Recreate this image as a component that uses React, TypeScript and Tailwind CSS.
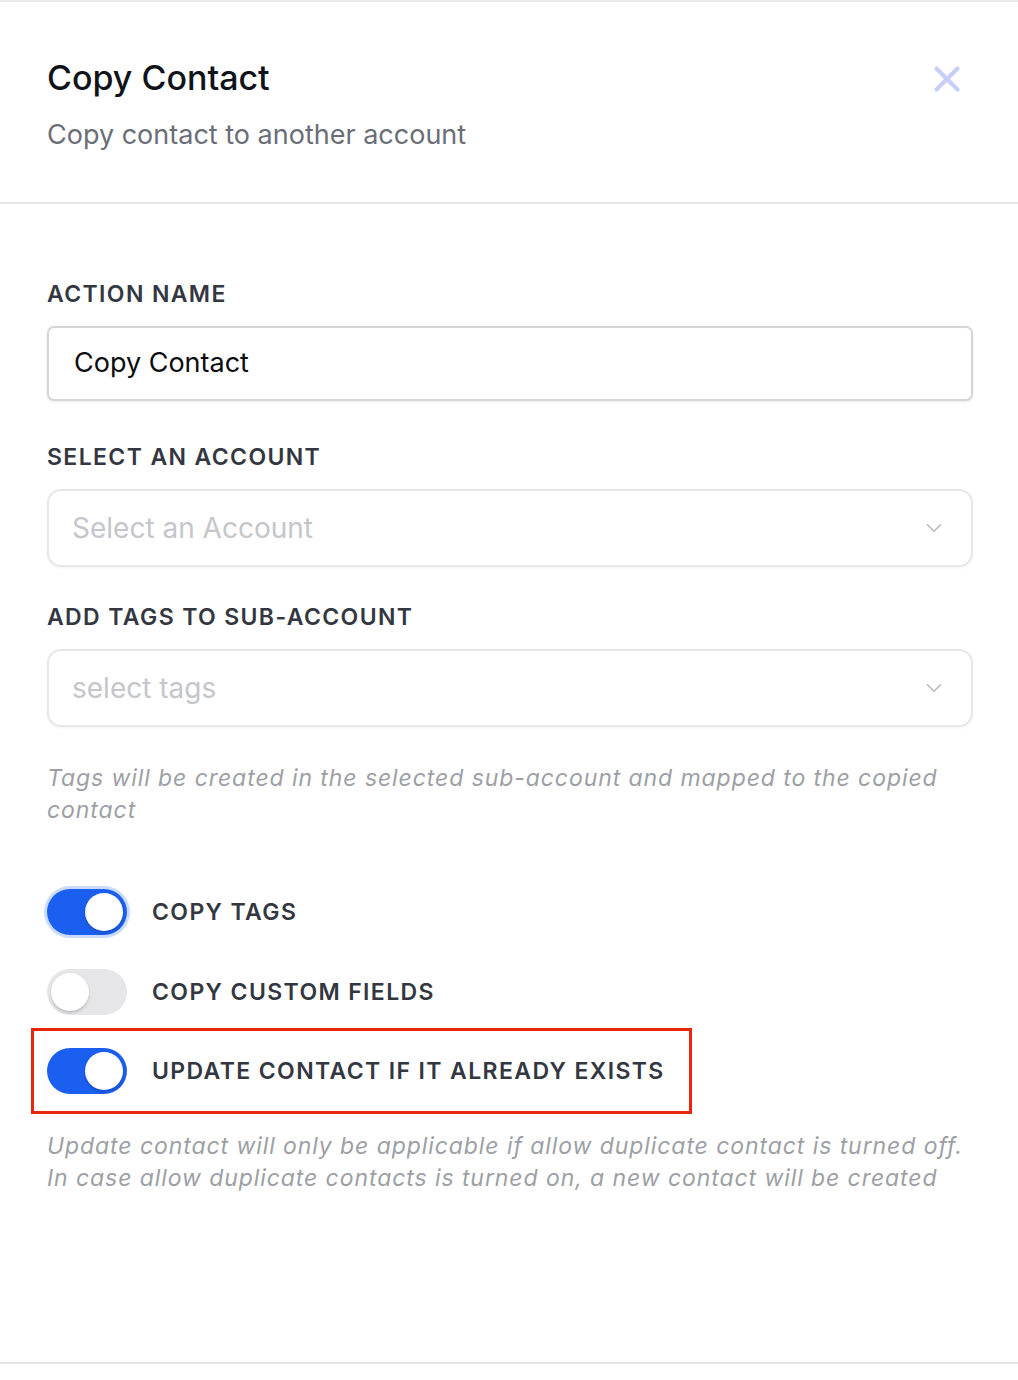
import { X, ChevronDown } from "lucide-react";

interface ToggleProps {
  on: boolean;
  focused?: boolean;
}

function Toggle({ on, focused }: ToggleProps) {
  return (
    <div
      className={`relative flex h-[46px] w-[80px] shrink-0 items-center rounded-full px-[4px] ${
        on ? "justify-end bg-[#1b5ff0]" : "justify-start bg-[#e6e6e8]"
      } ${focused ? "ring-[3px] ring-[#c9dcfd]" : ""}`}
    >
      <div className="h-[38px] w-[38px] rounded-full bg-white shadow-[0_2px_3px_rgba(0,0,0,0.18)]" />
    </div>
  );
}

function Label({ children }: { children: React.ReactNode }) {
  return (
    <div className="mb-[18px] text-[23px] font-semibold leading-[28px] tracking-[0.06em] text-[#333741]">
      {children}
    </div>
  );
}

function SelectBox({ placeholder }: { placeholder: string }) {
  return (
    <div className="flex h-[78px] items-center justify-between rounded-[14px] border-2 border-[#e7e7ea] bg-white pl-[23px] pr-[24px] shadow-[0_1px_3px_rgba(0,0,0,0.05)]">
      <span className="text-[28px] text-[#c4c6cc]">{placeholder}</span>
      <ChevronDown className="h-[26px] w-[26px] text-[#b8b9be]" strokeWidth={1.5} />
    </div>
  );
}

export default function App() {
  return (
    <div
      className="flex min-h-[1380px] w-full flex-col bg-white"
      style={{ fontFamily: "Inter, 'Noto Sans', sans-serif" }}
    >
      <div className="h-[2px] bg-[#ebebec]" />
      <div className="flex items-start justify-between border-b-2 border-[#e8e8ea] pb-[50px] pl-[47px] pr-[50px] pt-[54px]">
        <div>
          <h1 className="text-[34px] font-medium leading-[44px] text-[#11131a]">Copy Contact</h1>
          <p className="mt-[18px] text-[27px] leading-[34px] text-[#6b6e76]">Copy contact to another account</p>
        </div>
        <X className="mt-[2px] h-[42px] w-[42px] text-[#c7cff9]" strokeWidth={2.4} />
      </div>

      <div className="pl-[47px] pr-[45px] pt-[76px]">
        <Label>ACTION NAME</Label>
        <div className="flex h-[75px] items-center rounded-[7px] border-2 border-[#d6d6d9] bg-white pl-[25px] shadow-[0_1px_3px_rgba(0,0,0,0.08)]">
          <span className="text-[27px] text-[#0b0c0f]">Copy Contact</span>
        </div>

        <div className="mt-[42px]">
          <Label>SELECT AN ACCOUNT</Label>
          <SelectBox placeholder="Select an Account" />
        </div>

        <div className="mt-[36px]">
          <Label>ADD TAGS TO SUB-ACCOUNT</Label>
          <SelectBox placeholder="select tags" />
        </div>

        <p className="mt-[35px] text-[23px] italic leading-[32px] tracking-[0.04em] text-[#9d9fa6]">
          Tags will be created in the selected sub-account and mapped to the copied contact
        </p>

        <div className="mt-[63px] flex flex-col gap-[34px]">
          <div className="flex items-center gap-[25px]">
            <Toggle on focused />
            <span className="text-[23px] font-semibold tracking-[0.06em] text-[#333741]">COPY TAGS</span>
          </div>
          <div className="flex items-center gap-[25px]">
            <Toggle on={false} />
            <span className="text-[23px] font-semibold tracking-[0.06em] text-[#333741]">COPY CUSTOM FIELDS</span>
          </div>
        </div>

        <div className="ml-[-16px] mt-[13px] inline-flex items-center gap-[25px] border-[3px] border-[#e8260c] py-[17px] pl-[13px] pr-[24px]">
          <Toggle on />
          <span className="text-[23px] font-semibold tracking-[0.06em] text-[#333741]">UPDATE CONTACT IF IT ALREADY EXISTS</span>
        </div>

        <p className="mt-[16px] text-[23px] italic leading-[32px] tracking-[0.04em] text-[#9d9fa6]">
          Update contact will only be applicable if allow duplicate contact is turned off. In case allow duplicate contacts is turned on, a new contact will be created
        </p>
      </div>

      <div className="mt-auto h-[18px] border-t-2 border-[#e6e6e8] bg-white" />
    </div>
  );
}
